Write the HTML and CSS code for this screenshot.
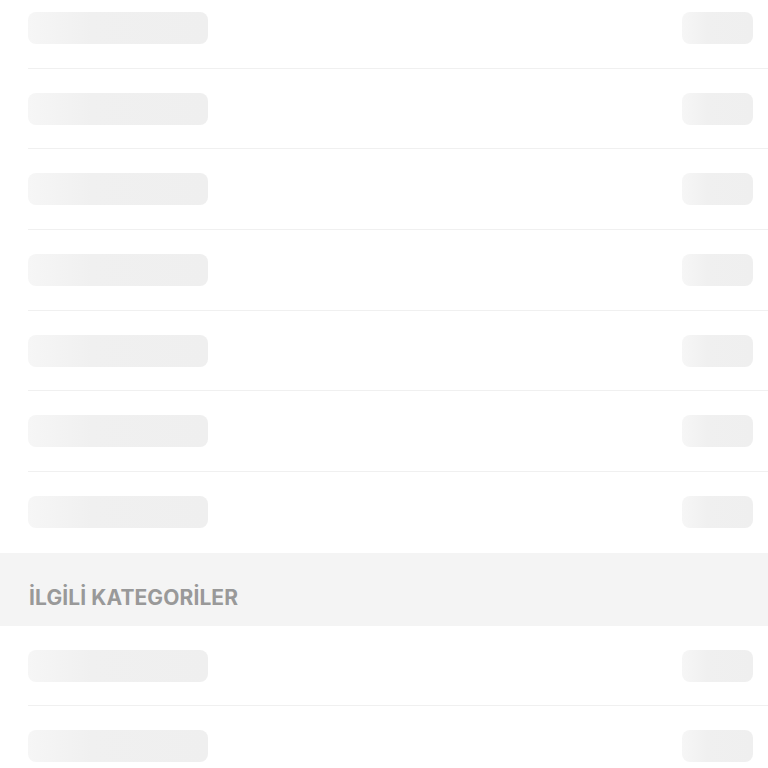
FILE: index.html
```html
<!DOCTYPE html>
<html lang="tr">
<head>
<meta charset="utf-8">
<title>İlgili Kategoriler</title>
<link rel="stylesheet" href="styles.css">
</head>
<body>
<div class="page">
  <ul class="list">
    <li class="row"><span class="sk sk-main"></span><span class="sk sk-side"></span></li>
    <li class="row"><span class="sk sk-main"></span><span class="sk sk-side"></span></li>
    <li class="row"><span class="sk sk-main"></span><span class="sk sk-side"></span></li>
    <li class="row"><span class="sk sk-main"></span><span class="sk sk-side"></span></li>
    <li class="row"><span class="sk sk-main"></span><span class="sk sk-side"></span></li>
    <li class="row"><span class="sk sk-main"></span><span class="sk sk-side"></span></li>
    <li class="row row-last"><span class="sk sk-main"></span><span class="sk sk-side"></span></li>
  </ul>
  <h2 class="section-title">İLGİLİ KATEGORİLER</h2>
  <ul class="list">
    <li class="row"><span class="sk sk-main"></span><span class="sk sk-side"></span></li>
    <li class="row"><span class="sk sk-main"></span><span class="sk sk-side"></span></li>
  </ul>
</div>
</body>
</html>
```
FILE: styles.css
```css
html, body {
  margin: 0;
  padding: 0;
  background: #ffffff;
  overflow: hidden;
}
body {
  font-family: Inter, "Noto Sans", sans-serif;
}
.page {
  margin-top: -11.83px;
}
.list {
  list-style: none;
  margin: 0;
  padding: 0;
}
.row {
  box-sizing: border-box;
  height: 80.67px;
  margin-left: 28px;
  padding-right: 15px;
  display: flex;
  align-items: center;
  justify-content: space-between;
  border-bottom: 1px solid #f0f0f0;
}
.row-last {
  border-bottom: none;
}
.sk {
  display: block;
  height: 32px;
  border-radius: 8px;
  background: linear-gradient(90deg, #f6f6f6 0%, #f0f0f0 35%, #efefef 100%);
}
.sk-main {
  width: 180px;
}
.sk-side {
  width: 71px;
}
.section-title {
  box-sizing: border-box;
  height: 73px;
  margin: 0;
  padding: 33px 28px 0 29px;
  background: #f4f4f4;
  color: #999999;
  font-size: 21px;
  line-height: 24px;
  font-weight: 700;
  letter-spacing: 0.1px;
}
```
